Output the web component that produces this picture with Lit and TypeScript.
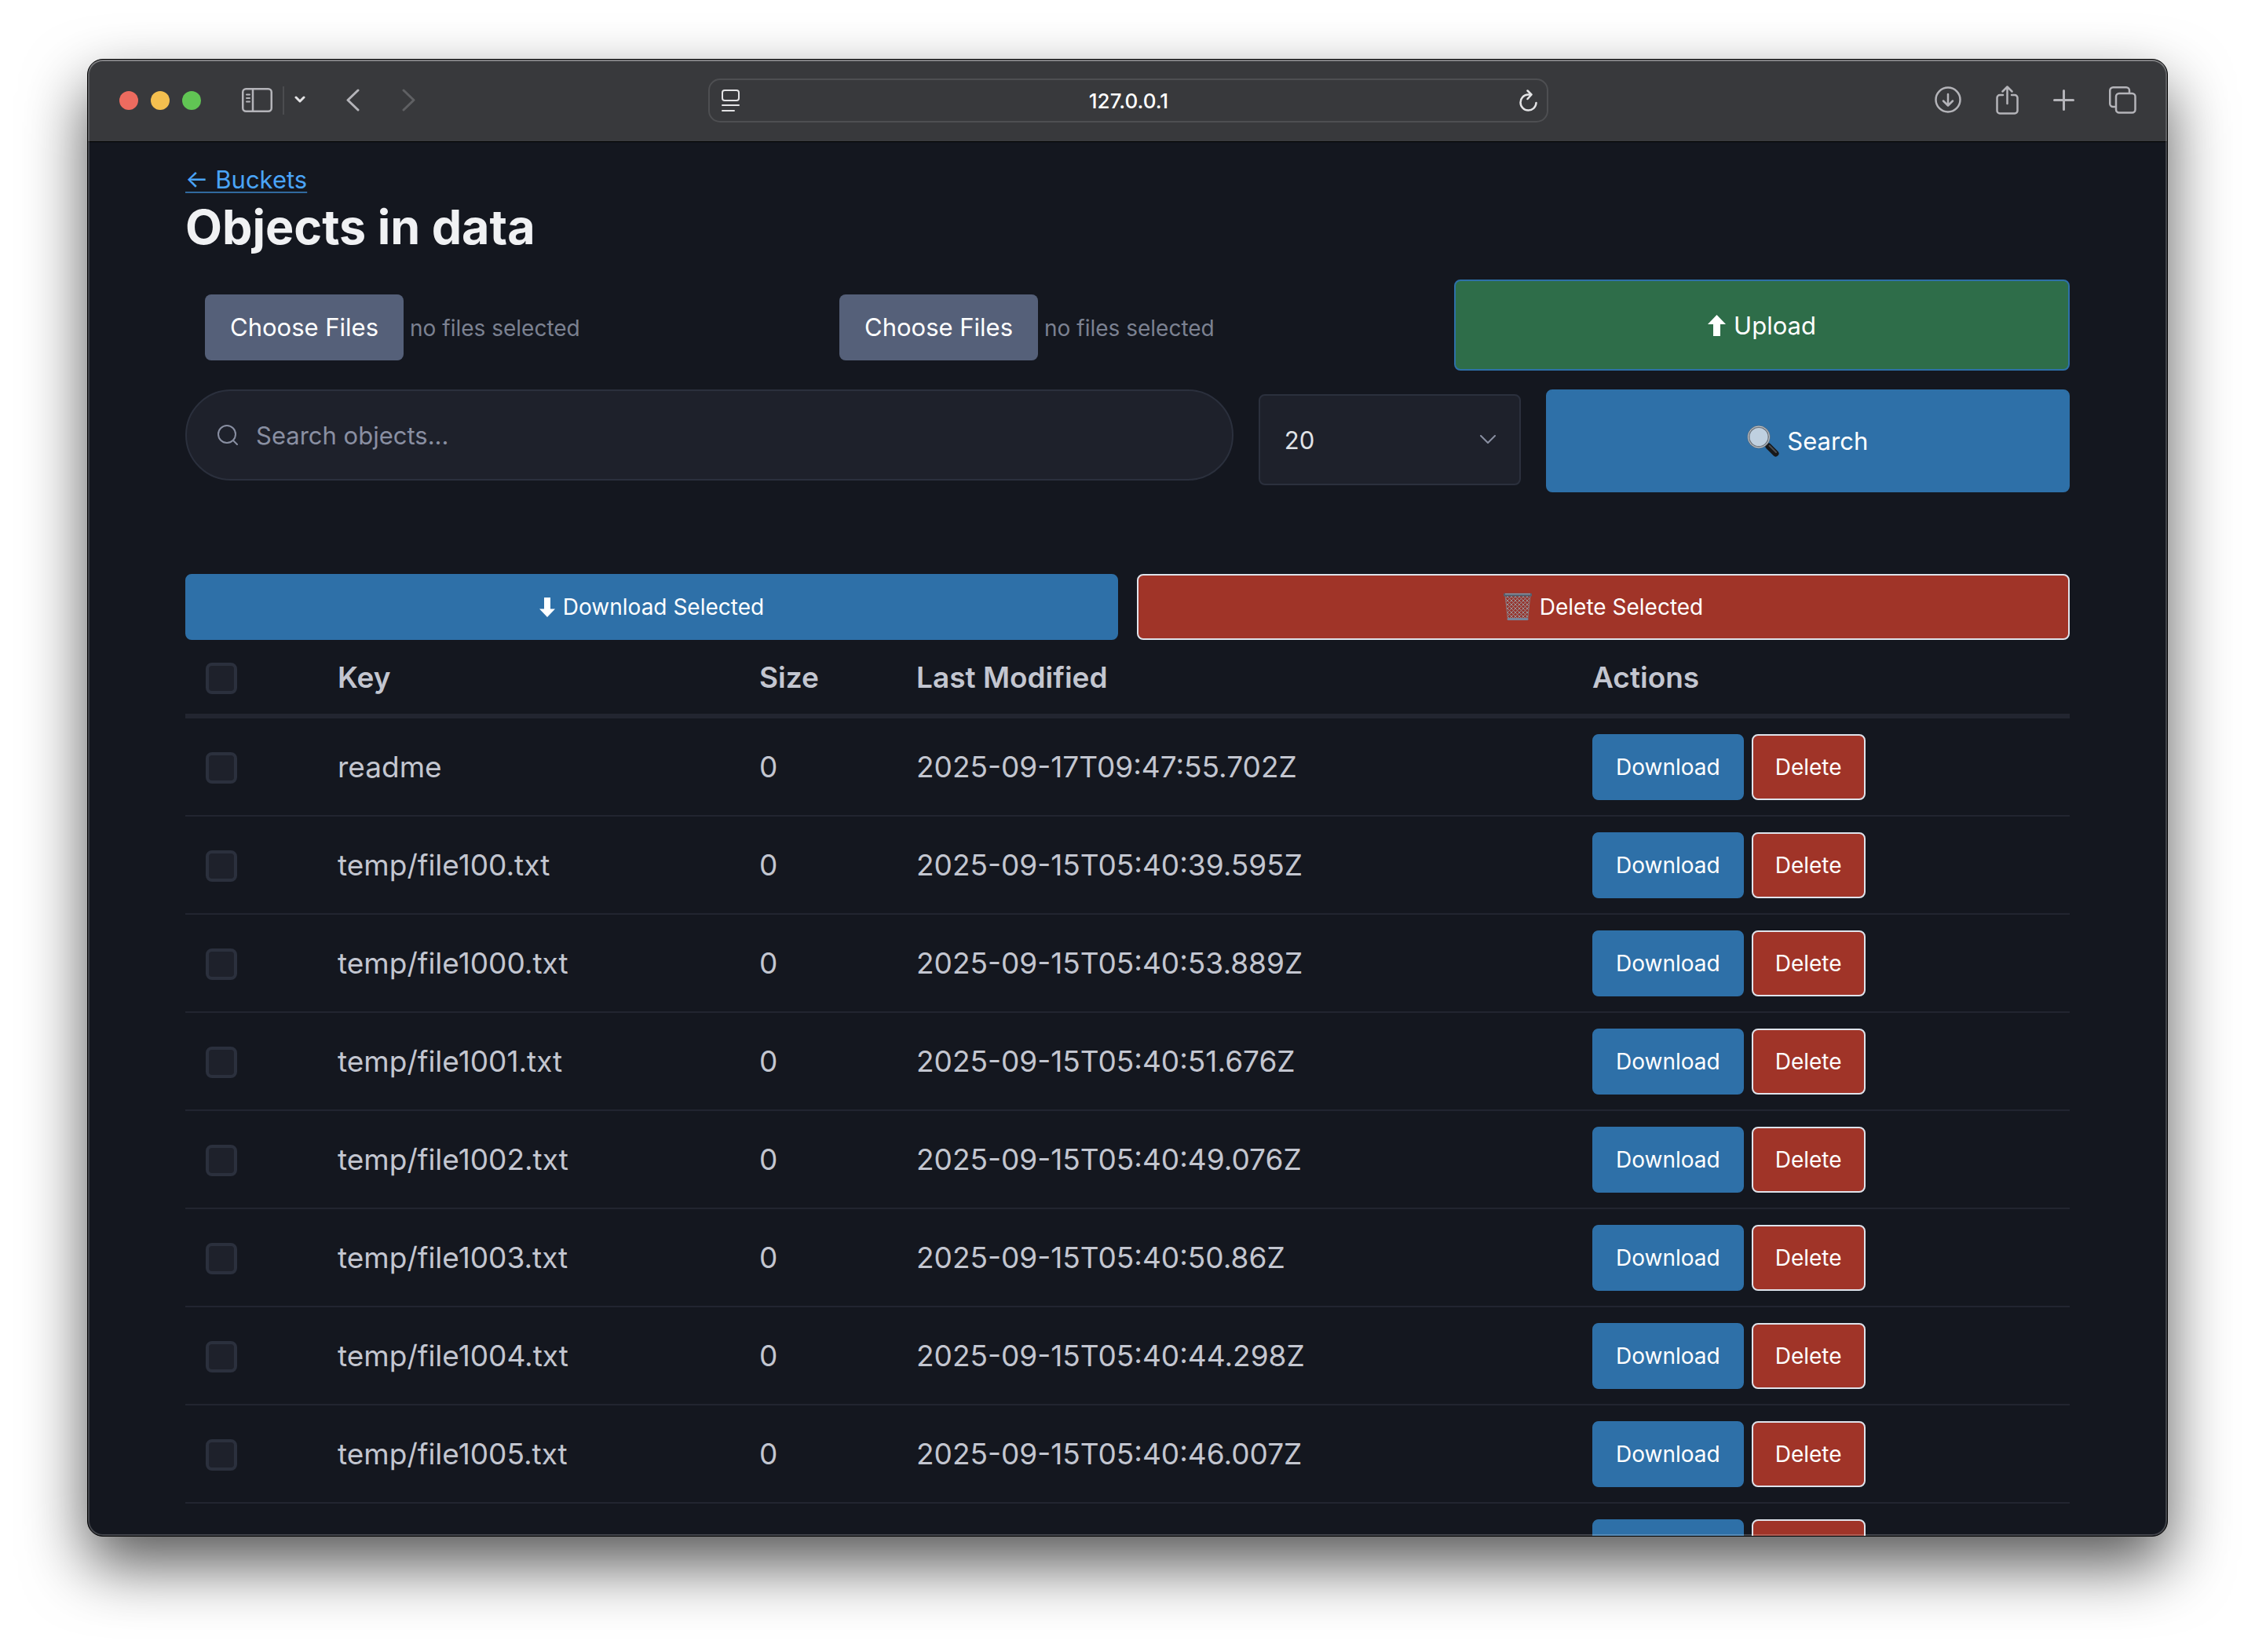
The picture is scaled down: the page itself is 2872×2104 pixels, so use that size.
import { LitElement, html, css, svg } from "lit";
import { customElement, state } from "lit/decorators.js";

interface StoredObject {
  key: string;
  size: number;
  modified: string;
}

const OBJECTS: StoredObject[] = [
  { key: "readme", size: 0, modified: "2025-09-17T09:47:55.702Z" },
  { key: "temp/file100.txt", size: 0, modified: "2025-09-15T05:40:39.595Z" },
  { key: "temp/file1000.txt", size: 0, modified: "2025-09-15T05:40:53.889Z" },
  { key: "temp/file1001.txt", size: 0, modified: "2025-09-15T05:40:51.676Z" },
  { key: "temp/file1002.txt", size: 0, modified: "2025-09-15T05:40:49.076Z" },
  { key: "temp/file1003.txt", size: 0, modified: "2025-09-15T05:40:50.86Z" },
  { key: "temp/file1004.txt", size: 0, modified: "2025-09-15T05:40:44.298Z" },
  { key: "temp/file1005.txt", size: 0, modified: "2025-09-15T05:40:46.007Z" },
  { key: "", size: 0, modified: "" },
];

const resets = css`
  *,
  *::before,
  *::after {
    box-sizing: border-box;
  }
  button,
  input,
  select {
    font: inherit;
    color: inherit;
    margin: 0;
  }
  svg {
    display: block;
    flex: none;
  }
`;

const stroke = (w: number, h: number, width: number, body: unknown) => html`
  <svg width=${w} height=${h} viewBox="0 0 ${w} ${h}" fill="none" stroke="currentColor"
    stroke-width=${width} stroke-linecap="round" stroke-linejoin="round" aria-hidden="true">${body}</svg>
`;

const sidebarIcon = stroke(39, 31, 2.5, svg`
  <rect x="1.25" y="1.25" width="36.5" height="28.5" rx="4"></rect>
  <path d="M14 1V30"></path><path d="M6 8.5h4M6 13h4M6 17.500h4" stroke-width="2"></path>`);
const menuIcon = stroke(14, 10, 3, svg`<path d="M2 2l5 5 5-5"></path>`);
const backIcon = stroke(17, 29, 3, svg`<path d="M15 2L2 14.500L15 27"></path>`);
const forwardIcon = stroke(17, 29, 3, svg`<path d="M2 2l13 12.500L2 27"></path>`);
const pageIcon = stroke(23, 28, 2, svg`
  <rect x="1" y="1" width="21" height="13" rx="3"></rect><path d="M1 20h21M1 27h15"></path>`);
const reloadIcon = stroke(24, 28, 2.5, svg`
  <path d="M14 6.500H12A10 10 0 1 0 22.500 17M11.500 1.500l5 5l-5 5.500"></path>`);
const downloadsIcon = stroke(34, 34, 2.5, svg`
  <circle cx="17" cy="17" r="15.500"></circle><path d="M17 10v14M11 18.500l6 6 6-6"></path>`);
const shareIcon = stroke(29, 37, 2.5, svg`
  <path d="M9 12H5a3.500 3.500 0 0 0-3.500 3.500V32A3.500 3.500 0 0 0 5 35.500H24a3.500 3.500 0 0 0 3.500-3.500V15.500A3.500 3.500 0 0 0 24 12H20M14.500 23V2M8.500 7.500l6-6 6 6"></path>`);
const plusIcon = stroke(27, 27, 3, svg`<path d="M13.500 1.500V25.500M1.500 13.500H25.500"></path>`);
const tabsIcon = stroke(35, 35, 2.5, svg`
  <rect x="9" y="9" width="24.5" height="24.5" rx="4"></rect>
  <path d="M8.500 26H5.250a4 4 0 0 1-4-4V5.250a4 4 0 0 1 4-4H22a4 4 0 0 1 4 4V8.500"></path>`);
const lensIcon = stroke(26, 26, 2, svg`
  <circle cx="12" cy="12" r="11"></circle><path d="M20 20l5 5"></path>`);
const selectIcon = stroke(20, 12, 2, svg`<path d="M1 1l9 9 9-9"></path>`);

const arrowUp = html`<svg width="23" height="27" viewBox="0 0 23 27" fill="currentColor" aria-hidden="true">
  <path d="M11.500 0L23 12H16V27H7V12H0z"></path></svg>`;
const arrowDown = html`<svg width="20" height="25" viewBox="0 0 20 25" fill="currentColor" aria-hidden="true">
  <path d="M10 25L0 14.500H6V0H14V14.500H20z"></path></svg>`;
const magnifier = html`<svg width="41" height="40" viewBox="0 0 41 40" aria-hidden="true">
  <path d="M25 25l3 3" stroke="#8b9096" stroke-width="4"></path>
  <path d="M27.500 26.500L36.500 35.500" stroke="#17181a" stroke-width="8" stroke-linecap="round"></path>
  <path d="M28.500 25.500L37 34" stroke="#4b4d50" stroke-width="2" stroke-linecap="round"></path>
  <circle cx="15" cy="14.500" r="13" fill="#bfd0e0" stroke="#6f7780" stroke-width="3"></circle>
  <circle cx="15" cy="14.500" r="13.500" fill="none" stroke="#c8ccd0" stroke-width="1"></circle></svg>`;
const trash = html`<svg width="36" height="36" viewBox="0 0 36 36" aria-hidden="true">
  <defs>
    <pattern id="mesh" width="5" height="5" patternUnits="userSpaceOnUse">
      <path d="M0 0L5 5M5 0L0 5" stroke="#9a8f92" stroke-width="1"></path>
    </pattern>
  </defs>
  <path d="M2 3H34L30.500 34H5.500z" fill="#963630"></path>
  <path d="M2 3H34L30.500 34H5.500z" fill="url(#mesh)" stroke="#857a80" stroke-width="1"></path>
  <path d="M6 33.500H30" stroke="#76849b" stroke-width="3" stroke-linecap="round"></path>
  <path d="M1.500 2.500H34.500" stroke="#57606e" stroke-width="4" stroke-linecap="round"></path>
  <path d="M2 1.500H34" stroke="#97a3b3" stroke-width="1"></path></svg>`;

@customElement("browser-toolbar")
class BrowserToolbar extends LitElement {
  static styles = [
    resets,
    css`
      :host {
        display: grid;
        grid-template-columns: 1fr minmax(0, 1070px) 1fr;
        align-items: center;
        height: 105px;
        padding: 0 39px 0 40px;
        background: #38393c;
        border-bottom: 1px solid #000;
        color: #b4b4b9;
      }
      .group,
      .lights,
      .nav,
      .sidebar,
      .tools,
      .address {
        display: flex;
        align-items: center;
      }
      .group {
        gap: 52px;
      }
      .lights {
        gap: 16px;
      }
      .light {
        width: 24px;
        height: 24px;
        border-radius: 50%;
      }
      .close {
        background: #ed6b5f;
      }
      .minimise {
        background: #f4bf4f;
      }
      .zoom {
        background: #61c554;
      }
      .sidebar {
        gap: 13px;
      }
      .divider {
        width: 2px;
        height: 36px;
        background: #4b4c4f;
      }
      .nav {
        gap: 54px;
      }
      .tools {
        justify-content: flex-end;
        gap: 44px;
      }
      button {
        display: block;
        border: 0;
        padding: 0 0 2px;
        background: none;
      }
      .bright {
        color: #e3e3e5;
      }
      .forward {
        color: #5f6063;
      }
      .address {
        height: 56px;
        padding: 0 12px 0 15px;
        border: 2px solid #4e4f52;
        border-radius: 15px;
      }
      .address button {
        padding: 0;
      }
      .url {
        flex: 1;
        min-width: 0;
        border: 0;
        padding: 0;
        background: none;
        color: #fff;
        font-size: 26px;
        font-weight: 500;
        text-align: center;
      }
    `,
  ];

  render() {
    return html`
      <div class="group">
        <div class="lights">
          <span class="light close"></span>
          <span class="light minimise"></span>
          <span class="light zoom"></span>
        </div>
        <div class="sidebar">
          <button aria-label="Show sidebar">${sidebarIcon}</button>
          <span class="divider"></span>
          <button class="bright" aria-label="Tab groups">${menuIcon}</button>
        </div>
        <div class="nav">
          <button aria-label="Back">${backIcon}</button>
          <button class="forward" aria-label="Forward">${forwardIcon}</button>
        </div>
      </div>
      <div class="address">
        <button class="bright" aria-label="Page menu">${pageIcon}</button>
        <input class="url" type="text" aria-label="Address" .value=${"127.0.0.1"} />
        <button class="bright" aria-label="Reload">${reloadIcon}</button>
      </div>
      <div class="tools">
        <button aria-label="Downloads">${downloadsIcon}</button>
        <button aria-label="Share">${shareIcon}</button>
        <button aria-label="New tab">${plusIcon}</button>
        <button aria-label="Tab overview">${tabsIcon}</button>
      </div>
    `;
  }
}

@customElement("object-browser")
class ObjectBrowser extends LitElement {
  static styles = [
    resets,
    css`
      :host {
        display: block;
        padding: 24px 124px 0;
        font-size: 31px;
        color: #c3c6d0;
      }
      .back {
        display: block;
        width: fit-content;
        line-height: 48px;
        color: #4aa4f8;
        text-decoration: underline 2px #31699e;
        text-underline-offset: 4px;
      }
      h1 {
        margin: 0 0 31px;
        font-size: 61px;
        line-height: 72px;
        font-weight: 700;
        color: #f0f1f3;
      }
      .upload {
        display: grid;
        grid-template-columns: repeat(3, 1fr);
        gap: 24px;
        margin-bottom: 24px;
      }
      .file {
        display: flex;
        align-items: baseline;
        gap: 8px;
        padding: 19px 25px 13px;
        color: #7b8191;
        font-size: 28px;
      }
      .file input {
        position: absolute;
        width: 1px;
        height: 1px;
        opacity: 0;
      }
      .choose {
        padding: 0 32px;
        border-radius: 8px;
        background: #556079;
        color: #fff;
        font-size: 31px;
        line-height: 84px;
      }
      .button {
        display: inline-flex;
        align-items: center;
        justify-content: center;
        gap: 10px;
        height: 84px;
        padding: 0 28px;
        border: 2px solid #2e70a8;
        border-radius: 8px;
        background: #2e70a8;
        color: #fff;
        font-size: 28px;
      }
      .large {
        height: auto;
        font-size: 31px;
      }
      .green {
        background: #2e6d49;
      }
      .red {
        border-color: #dfe3eb;
        background: #a03428;
      }
      .search {
        display: grid;
        grid-template-columns: 4fr 1fr 2fr;
        align-items: start;
        gap: 32px;
        margin-bottom: 104px;
      }
      .field {
        display: flex;
        align-items: center;
        gap: 23px;
        height: 116px;
        padding: 0 39px;
        border: 2px solid #2b303d;
        border-radius: 58px;
        background: #1e212b;
        color: #898fa2;
      }
      .query {
        flex: 1;
        min-width: 0;
        border: 0;
        padding: 0;
        background: none;
        color: #e0e3e7;
      }
      .query::placeholder {
        color: #898fa2;
        opacity: 1;
      }
      .limit {
        position: relative;
        padding-top: 6px;
      }
      .limit select {
        display: block;
        width: 100%;
        height: 116px;
        padding: 0 31px;
        appearance: none;
        border: 2px solid #2b303d;
        border-radius: 8px;
        background: #1e212b;
        color: #e0e3e7;
      }
      .limit svg {
        position: absolute;
        right: 32px;
        top: 58px;
        color: #898fa2;
        pointer-events: none;
      }
      .submit {
        height: 131px;
      }
      .bulk {
        display: grid;
        grid-template-columns: 1fr 1fr;
        gap: 24px;
      }
      table {
        width: 100%;
        table-layout: fixed;
        border-collapse: separate;
        border-spacing: 0;
        font-size: 37px;
      }
      .pick-col {
        width: 174px;
      }
      .key-col {
        width: 537px;
      }
      .size-col {
        width: 200px;
      }
      .action-col {
        width: 628px;
      }
      th,
      td {
        padding: 0 20px;
        text-align: left;
        white-space: nowrap;
      }
      th {
        height: 100px;
        border-bottom: 6px solid #222530;
        font-weight: 600;
      }
      td {
        height: 125px;
        border-bottom: 2px solid #222530;
      }
      .pick {
        padding: 3px 26px 0;
      }
      .tick {
        display: block;
        width: 40px;
        height: 40px;
        appearance: none;
        border: 4px solid #2b303d;
        border-radius: 8px;
        background: #1e212b;
      }
      .tick:checked {
        background: #2e70a8;
      }
      .actions {
        display: flex;
        gap: 10px;
      }
    `,
  ];

  @state() private selected = new Set<string>();

  private toggle(key: string) {
    const next = new Set(this.selected);
    next.has(key) ? next.delete(key) : next.add(key);
    this.selected = next;
  }

  private filePicker(name: string) {
    return html`
      <label class="file">
        <input type="file" name=${name} multiple />
        <span class="choose">Choose Files</span>
        <span>no files selected</span>
      </label>
    `;
  }

  private row(item: StoredObject) {
    return html`
      <tr>
        <td class="pick">
          <input class="tick" type="checkbox" aria-label="Select ${item.key}"
            .checked=${this.selected.has(item.key)} @change=${() => this.toggle(item.key)} />
        </td>
        <td>${item.key}</td>
        <td>${item.key ? item.size : ""}</td>
        <td>${item.modified}</td>
        <td>
          <div class="actions">
            <button class="button">Download</button>
            <button class="button red">Delete</button>
          </div>
        </td>
      </tr>
    `;
  }

  render() {
    return html`
      <a class="back" href="#buckets">← Buckets</a>
      <h1>Objects in data</h1>
      <form class="upload" @submit=${(e: Event) => e.preventDefault()}>
        ${this.filePicker("files")} ${this.filePicker("folder")}
        <button class="button large green">${arrowUp}<span>Upload</span></button>
      </form>
      <form class="search" @submit=${(e: Event) => e.preventDefault()}>
        <label class="field">
          ${lensIcon}
          <input class="query" type="text" aria-label="Search objects" placeholder="Search objects..." />
        </label>
        <div class="limit">
          <select aria-label="Objects per page">
            <option>20</option>
            <option>50</option>
            <option>100</option>
          </select>
          ${selectIcon}
        </div>
        <button class="button large submit">${magnifier}<span>Search</span></button>
      </form>
      <div class="bulk">
        <button class="button">${arrowDown}<span>Download Selected</span></button>
        <button class="button red">${trash}<span>Delete Selected</span></button>
      </div>
      <table>
        <colgroup>
          <col class="pick-col" />
          <col class="key-col" />
          <col class="size-col" />
          <col />
          <col class="action-col" />
        </colgroup>
        <thead>
          <tr>
            <th class="pick"><input class="tick" type="checkbox" aria-label="Select all" /></th>
            <th>Key</th>
            <th>Size</th>
            <th>Last Modified</th>
            <th>Actions</th>
          </tr>
        </thead>
        <tbody>
          ${OBJECTS.map((item) => this.row(item))}
        </tbody>
      </table>
    `;
  }
}

@customElement("app-root")
class AppRoot extends LitElement {
  static styles = [
    resets,
    css`
      :host {
        display: flex;
        box-sizing: border-box;
        height: 100vh;
        padding: 75px 111px 147px;
        background: #fff;
        font-family: "Inter", "Liberation Sans", sans-serif;
      }
      .window {
        position: relative;
        flex: 1;
        min-width: 0;
        overflow: hidden;
        border: 1px solid #000;
        border-radius: 20px;
        background: #14171f;
        box-shadow: 0 36px 80px rgba(0, 0, 0, 0.66);
      }
      .window::after {
        content: "";
        position: absolute;
        inset: 0;
        border-radius: 19px;
        box-shadow: inset 0 0 0 2px rgba(255, 255, 255, 0.2), inset 0 2px 0 rgba(255, 255, 255, 0.2);
        pointer-events: none;
      }
    `,
  ];

  render() {
    return html`
      <div class="window">
        <browser-toolbar></browser-toolbar>
        <object-browser></object-browser>
      </div>
    `;
  }
}
